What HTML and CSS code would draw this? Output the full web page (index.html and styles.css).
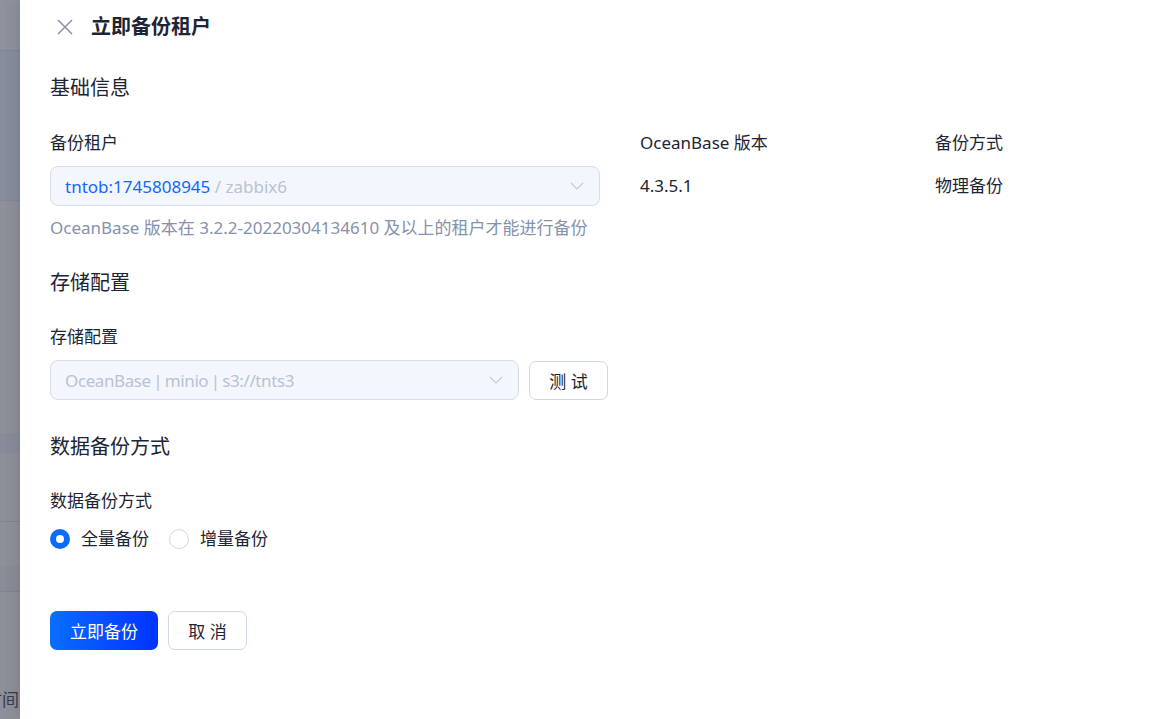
FILE: index.html
```html
<!DOCTYPE html>
<html lang="zh-CN">
<head>
<meta charset="utf-8">
<title>立即备份租户</title>
<link rel="stylesheet" href="styles.css">
</head>
<body>
<div class="page">
  <div class="backdrop">
    <div class="bd bd-a"></div>
    <div class="bd bd-b"></div>
    <div class="bd bd-c"></div>
    <div class="bd bd-d"></div>
    <div class="bd bd-e"></div>
    <div class="bd bd-f"></div>
    <div class="bd bd-g"></div>
    <div class="bd bd-h"><span class="bd-text">时间</span></div>
  </div>
  <div class="drawer">
    <div class="header">
      <span class="close">
        <svg width="16" height="16" viewBox="0 0 16 16"><path d="M1 1L15 15M15 1L1 15" stroke="#8a93a6" stroke-width="1.5" fill="none"/></svg>
      </span>
      <span class="title">立即备份租户</span>
    </div>

    <div class="section-title">基础信息</div>
    <div class="info-grid">
      <div class="field">
        <div class="label">备份租户</div>
        <div class="select">
          <span class="sel-value"><span class="sel-main">tntob:1745808945</span><span class="sel-sub"> / zabbix6</span></span>
          <svg class="arrow" width="14" height="8" viewBox="0 0 14 8"><path d="M1 1L7 7L13 1" stroke="#c3cad8" stroke-width="1.2" fill="none"/></svg>
        </div>
        <div class="hint">OceanBase 版本在 3.2.2-20220304134610 及以上的租户才能进行备份</div>
      </div>
      <div class="field">
        <div class="label">OceanBase 版本</div>
        <div class="value">4.3.5.1</div>
      </div>
      <div class="field">
        <div class="label">备份方式</div>
        <div class="value">物理备份</div>
      </div>
    </div>

    <div class="section-title st-2">存储配置</div>
    <div class="label lb-2">存储配置</div>
    <div class="row">
      <div class="select select-short">
        <span class="sel-value"><span class="sel-sub tight">OceanBase | minio | s3://tnts3</span></span>
        <svg class="arrow" width="14" height="8" viewBox="0 0 14 8"><path d="M1 1L7 7L13 1" stroke="#c3cad8" stroke-width="1.2" fill="none"/></svg>
      </div>
      <button class="btn btn-default btn-test">测 试</button>
    </div>

    <div class="section-title st-3">数据备份方式</div>
    <div class="label lb-2">数据备份方式</div>
    <div class="radios">
      <label class="radio"><span class="dot dot-on"></span><span>全量备份</span></label>
      <label class="radio"><span class="dot"></span><span>增量备份</span></label>
    </div>

    <div class="actions">
      <button class="btn btn-primary">立即备份</button>
      <button class="btn btn-default btn-cancel">取 消</button>
    </div>
  </div>
</div>
</body>
</html>
```
FILE: styles.css
```css
html, body {
  margin: 0;
  padding: 0;
  height: 100%;
}
body {
  font-family: "Noto Sans", "Noto Sans CJK SC", sans-serif;
  color: #1d2433;
  background: #fff;
}
.page {
  display: flex;
  height: 719px;
  overflow: hidden;
}
.backdrop {
  width: 20px;
  flex: none;
  display: flex;
  flex-direction: column;
  overflow: hidden;
  background: #8e9099;
}
.bd { flex: none; }
.bd-a { height: 50px; background: #8e929d; border-bottom: 1px solid #80869a; }
.bd-b { height: 149px; background: #878d9c; border-bottom: 1px solid #838897; }
.bd-c { height: 232px; background: #8e9099; }
.bd-d { height: 20px; background: #898c98; }
.bd-e { height: 68px; background: #8e9099; border-bottom: 1px solid #82858f; }
.bd-f { height: 44px; background: #8e9099; }
.bd-g { height: 25px; background: #8a8d97; border-bottom: 1px solid #82858f; }
.bd-h {
  flex: 1;
  background: #8e9099;
  display: flex;
  justify-content: flex-end;
  align-items: flex-end;
  padding-bottom: 7px;
}
.bd-text {
  white-space: nowrap;
  font-size: 17px;
  line-height: 24px;
  color: #353b4a;
  margin-right: 1px;
}
.drawer {
  flex: 1;
  padding: 0 30px;
  background: #fff;
  box-shadow: -4px 0 12px rgba(30, 40, 60, 0.12);
  position: relative;
}
.header {
  height: 54px;
  display: flex;
  align-items: center;
  padding-left: 7px;
}
.close {
  width: 16px;
  height: 16px;
  display: flex;
  margin-right: 18px;
}
.title {
  font-size: 20px;
  font-weight: 700;
  line-height: 28px;
  color: #1d2433;
}
.section-title {
  margin-top: 20px;
  font-size: 20px;
  line-height: 28px;
  color: #1d2433;
}
.st-2 { margin-top: 29px; }
.st-3 { margin-top: 33px; }
.info-grid {
  margin-top: 29px;
  display: grid;
  grid-template-columns: 550px 255px 1fr;
  column-gap: 40px;
}
.label {
  font-size: 17px;
  line-height: 24px;
  color: #1d2433;
}
.lb-2 { margin-top: 28px; }
.field .label + .select,
.field .label + .value { margin-top: 11px; }
.value {
  font-size: 17px;
  line-height: 40px;
  color: #1d2433;
}
.select {
  height: 40px;
  box-sizing: border-box;
  border: 1px solid #d5dcea;
  border-radius: 8px;
  background: #f3f6fc;
  display: flex;
  align-items: center;
  justify-content: space-between;
  padding: 0 15px 0 14px;
  font-size: 17px;
}
.lb-2 + .row { margin-top: 11px; }
.sel-main { color: #1366ff; }
.sel-sub { color: #b9c2d4; }
.tight { word-spacing: -1.5px; letter-spacing: -0.4px; }
.arrow { flex: none; }
.hint {
  margin-top: 10px;
  font-size: 17px;
  line-height: 24px;
  color: #8592ab;
}
.row {
  display: flex;
  align-items: center;
  gap: 10px;
}
.select-short { width: 469px; }
.btn {
  font-family: "Noto Sans", "Noto Sans CJK SC", sans-serif;
  font-size: 17px;
  height: 39px;
  border-radius: 7px;
  box-sizing: border-box;
  cursor: pointer;
  padding: 0;
}
.btn-default {
  background: #fff;
  border: 1px solid #cfd6e4;
  color: #1d2433;
}
.btn-test { width: 79px; height: 39px; }
.btn-cancel { width: 79px; }
.btn-primary {
  width: 108px;
  border: none;
  color: #fff;
  background: linear-gradient(90deg, #0a6dff 0%, #0033ff 100%);
}
.radios {
  margin-top: 14px;
  display: flex;
  align-items: center;
  gap: 20px;
  height: 24px;
}
.radio {
  display: flex;
  align-items: center;
  gap: 11px;
  font-size: 17px;
  line-height: 24px;
  color: #1d2433;
}
.dot {
  width: 20px;
  height: 20px;
  box-sizing: border-box;
  border-radius: 50%;
  border: 1px solid #cfd6e4;
  background: #fff;
}
.dot-on {
  border: 6px solid #0a6cff;
}
.actions {
  margin-top: 60px;
  display: flex;
  gap: 10px;
}
```
